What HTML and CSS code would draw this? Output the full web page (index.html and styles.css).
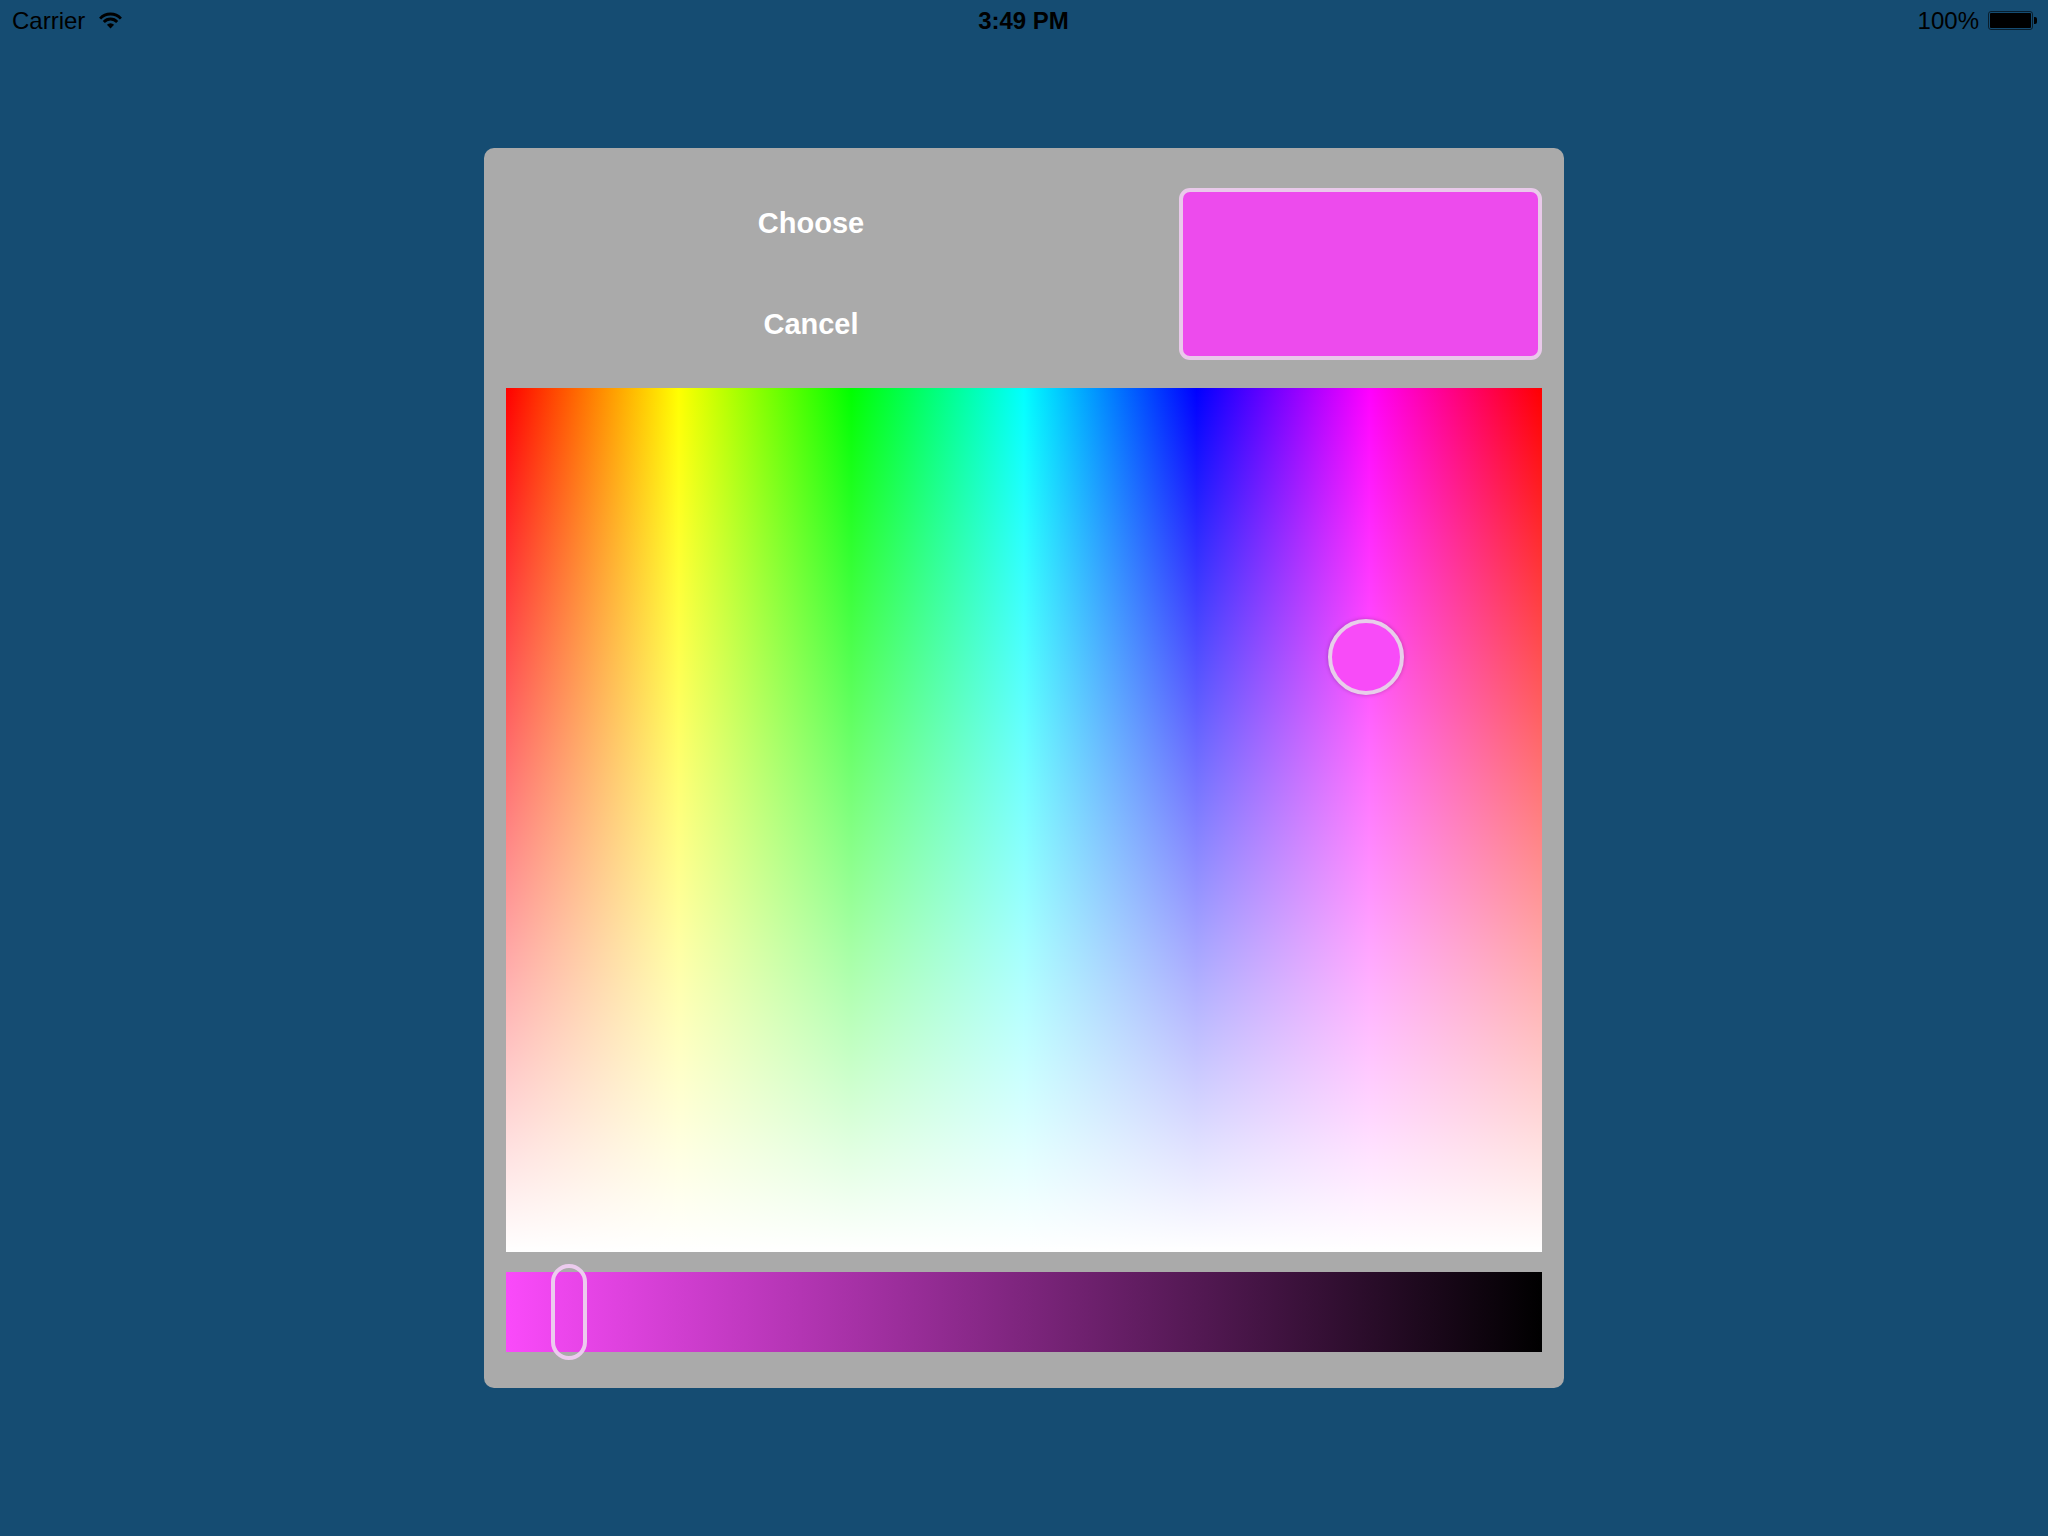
FILE: index.html
```html
<!DOCTYPE html>
<html>
<head>
<meta charset="utf-8">
<title>Color Picker</title>
<link rel="stylesheet" href="styles.css">
</head>
<body>
<div class="statusbar">
  <div class="sb-left">
    <span class="carrier">Carrier</span>
    <svg class="wifi" width="25" height="17" viewBox="0 0 25 17">
      <path d="M2.1 6.63 A14 14 0 0 1 22.9 6.63" fill="none" stroke="#000" stroke-width="2.8"/>
      <path d="M5.81 9.98 A9 9 0 0 1 19.19 9.98" fill="none" stroke="#000" stroke-width="2.8"/>
      <path d="M12.5 16.5 L8.9 12.8 A5 5 0 0 1 16.1 12.8 Z" fill="#000"/>
    </svg>
  </div>
  <div class="sb-time">3:49 PM</div>
  <div class="sb-right">
    <span class="pct">100%</span>
    <div class="battery"><div class="battery-fill"></div></div>
    <div class="battery-tip"></div>
  </div>
</div>

<main class="stage">
  <section class="panel">
    <div class="header">
      <div class="buttons">
        <button class="btn btn-choose">Choose</button>
        <button class="btn btn-cancel">Cancel</button>
      </div>
      <div class="swatch"></div>
    </div>
    <div class="spectrum">
      <div class="picker-dot"></div>
    </div>
    <div class="brightness">
      <div class="thumb"></div>
    </div>
  </section>
</main>
</body>
</html>
```

FILE: styles.css
```css
html, body {
  margin: 0;
  padding: 0;
}

body {
  width: 2048px;
  height: 1536px;
  background: #154c72;
  font-family: "Liberation Sans", Arial, Helvetica, sans-serif;
  overflow: hidden;
}

.statusbar {
  height: 40px;
  display: grid;
  grid-template-columns: 1fr auto 1fr;
  align-items: center;
  padding: 0 11px 0 12px;
  color: #000;
  font-size: 24px;
  line-height: 40px;
}

.sb-left {
  display: flex;
  align-items: center;
  gap: 13px;
}

.carrier {
  position: relative;
  top: 1px;
}

.wifi {
  display: block;
  margin-top: 1px;
}

.sb-time {
  font-weight: bold;
  position: relative;
  top: 1px;
  left: -1px;
}

.sb-right {
  display: flex;
  align-items: center;
  justify-content: flex-end;
}

.pct {
  position: relative;
  top: 1px;
  margin-right: 9px;
}

.battery {
  width: 45px;
  height: 19px;
  box-sizing: border-box;
  border: 1px solid rgba(0, 0, 0, 0.6);
  border-radius: 3px;
  padding: 1px;
  margin-top: 1px;
}

.battery-fill {
  width: 100%;
  height: 100%;
  background: #000;
  border-radius: 1px;
}

.battery-tip {
  width: 3px;
  height: 7px;
  background: #000;
  border-radius: 0 2px 2px 0;
  margin-left: 1px;
  margin-top: 1px;
}

.stage {
  display: flex;
  justify-content: flex-start;
  padding-left: 484px;
  padding-top: 108px;
}

.panel {
  width: 1080px;
  height: 1240px;
  box-sizing: border-box;
  background: #aaaaaa;
  border-radius: 10px;
  padding: 40px 22px 36px 22px;
  display: flex;
  flex-direction: column;
}

.header {
  height: 172px;
  display: flex;
  align-items: flex-start;
  justify-content: space-between;
}

.buttons {
  width: 610px;
  display: flex;
  flex-direction: column;
  align-items: center;
  padding-top: 18px;
  gap: 67px;
}

.btn {
  background: none;
  border: none;
  padding: 0;
  margin: 0;
  font-family: "Liberation Sans", Arial, Helvetica, sans-serif;
  font-weight: bold;
  font-size: 29px;
  line-height: 34px;
  color: #ffffff;
}

.swatch {
  width: 363px;
  height: 172px;
  box-sizing: border-box;
  background: #ed4bed;
  border: 4px solid #e9c9ea;
  border-radius: 11px;
}

.spectrum {
  position: relative;
  margin-top: 28px;
  height: 864px;
  background:
    linear-gradient(to bottom, rgba(255, 255, 255, 0) 0%, #ffffff 100%),
    linear-gradient(to right, #ff0000 0%, #ffff00 16.667%, #00ff00 33.333%, #00ffff 50%, #0000ff 66.667%, #ff00ff 83.333%, #ff0000 100%);
}

.picker-dot {
  position: absolute;
  left: 822px;
  top: 231px;
  width: 76px;
  height: 76px;
  box-sizing: border-box;
  border-radius: 50%;
  background: #f84bf8;
  border: 4px solid #e8cdea;
  box-shadow: 0 0 4px rgba(0, 0, 0, 0.25);
}

.brightness {
  position: relative;
  margin-top: 20px;
  height: 80px;
  background: linear-gradient(to right, #fa4afa 0%, #000000 100%);
}

.thumb {
  position: absolute;
  left: 45px;
  top: -8px;
  width: 36px;
  height: 96px;
  box-sizing: border-box;
  border: 4px solid #eccbee;
  border-radius: 18px;
}
```
